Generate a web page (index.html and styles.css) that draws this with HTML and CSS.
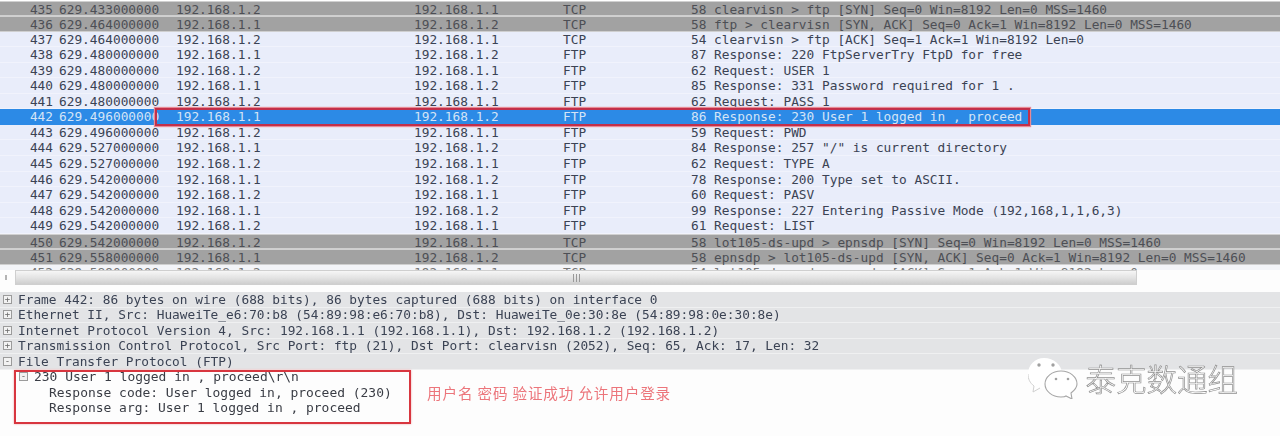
FILE: index.html
```html
<!DOCTYPE html>
<html lang="zh">
<head>
    <meta charset="UTF-8">
    <meta name="viewport" content="width=device-width, initial-scale=1.0">
    <title>FTP capture</title>
    <link rel="stylesheet" href="styles.css">
</head>
<body>
<div class="page">

    <!-- packet list -->
    <div class="packets">
        <div class="row tcp"><span>435</span><span class="time">629.433000000</span><span>192.168.1.2</span><span>192.168.1.1</span><span>TCP</span><span class="info">58 clearvisn &gt; ftp [SYN] Seq=0 Win=8192 Len=0 MSS=1460</span></div>
        <div class="row tcp"><span>436</span><span class="time">629.464000000</span><span>192.168.1.1</span><span>192.168.1.2</span><span>TCP</span><span class="info">58 ftp &gt; clearvisn [SYN, ACK] Seq=0 Ack=1 Win=8192 Len=0 MSS=1460</span></div>
        <div class="row"><span>437</span><span class="time">629.464000000</span><span>192.168.1.2</span><span>192.168.1.1</span><span>TCP</span><span class="info">54 clearvisn &gt; ftp [ACK] Seq=1 Ack=1 Win=8192 Len=0</span></div>
        <div class="row"><span>438</span><span class="time">629.480000000</span><span>192.168.1.1</span><span>192.168.1.2</span><span>FTP</span><span class="info">87 Response: 220 FtpServerTry FtpD for free</span></div>
        <div class="row"><span>439</span><span class="time">629.480000000</span><span>192.168.1.2</span><span>192.168.1.1</span><span>FTP</span><span class="info">62 Request: USER 1</span></div>
        <div class="row"><span>440</span><span class="time">629.480000000</span><span>192.168.1.1</span><span>192.168.1.2</span><span>FTP</span><span class="info">85 Response: 331 Password required for 1 .</span></div>
        <div class="row"><span>441</span><span class="time">629.480000000</span><span>192.168.1.2</span><span>192.168.1.1</span><span>FTP</span><span class="info">62 Request: PASS 1</span></div>
        <div class="row selected"><span>442</span><span class="time">629.496000000</span><span>192.168.1.1</span><span>192.168.1.2</span><span>FTP</span><span class="info">86 Response: 230 User 1 logged in , proceed</span></div>
        <div class="row"><span>443</span><span class="time">629.496000000</span><span>192.168.1.2</span><span>192.168.1.1</span><span>FTP</span><span class="info">59 Request: PWD</span></div>
        <div class="row"><span>444</span><span class="time">629.527000000</span><span>192.168.1.1</span><span>192.168.1.2</span><span>FTP</span><span class="info">84 Response: 257 "/" is current directory</span></div>
        <div class="row"><span>445</span><span class="time">629.527000000</span><span>192.168.1.2</span><span>192.168.1.1</span><span>FTP</span><span class="info">62 Request: TYPE A</span></div>
        <div class="row"><span>446</span><span class="time">629.542000000</span><span>192.168.1.1</span><span>192.168.1.2</span><span>FTP</span><span class="info">78 Response: 200 Type set to ASCII.</span></div>
        <div class="row"><span>447</span><span class="time">629.542000000</span><span>192.168.1.2</span><span>192.168.1.1</span><span>FTP</span><span class="info">60 Request: PASV</span></div>
        <div class="row"><span>448</span><span class="time">629.542000000</span><span>192.168.1.1</span><span>192.168.1.2</span><span>FTP</span><span class="info">99 Response: 227 Entering Passive Mode (192,168,1,1,6,3)</span></div>
        <div class="row"><span>449</span><span class="time">629.542000000</span><span>192.168.1.2</span><span>192.168.1.1</span><span>FTP</span><span class="info">61 Request: LIST</span></div>
        <div class="row tcp"><span>450</span><span class="time">629.542000000</span><span>192.168.1.2</span><span>192.168.1.1</span><span>TCP</span><span class="info">58 lot105-ds-upd &gt; epnsdp [SYN] Seq=0 Win=8192 Len=0 MSS=1460</span></div>
        <div class="row tcp"><span>451</span><span class="time">629.558000000</span><span>192.168.1.1</span><span>192.168.1.2</span><span>TCP</span><span class="info">58 epnsdp &gt; lot105-ds-upd [SYN, ACK] Seq=0 Ack=1 Win=8192 Len=0 MSS=1460</span></div>
        <div class="row last"><span>452</span><span class="time">629.589000000</span><span>192.168.1.2</span><span>192.168.1.1</span><span>TCP</span><span class="info">54 lot105-ds-upd &gt; epnsdp [ACK] Seq=1 Ack=1 Win=8192 Len=0</span></div>
    </div>

    <!-- scrollbar -->
    <div class="scroll-row">
        <span class="scroll-arrow"></span>
        <div class="scroll-track"><span class="scroll-grip"></span></div>
    </div>

    <!-- packet details -->
    <div class="details">
        <div class="detail"><span class="toggle">+</span>Frame 442: 86 bytes on wire (688 bits), 86 bytes captured (688 bits) on interface 0</div>
        <div class="detail"><span class="toggle">+</span>Ethernet II, Src: HuaweiTe_e6:70:b8 (54:89:98:e6:70:b8), Dst: HuaweiTe_0e:30:8e (54:89:98:0e:30:8e)</div>
        <div class="detail"><span class="toggle">+</span>Internet Protocol Version 4, Src: 192.168.1.1 (192.168.1.1), Dst: 192.168.1.2 (192.168.1.2)</div>
        <div class="detail"><span class="toggle">+</span>Transmission Control Protocol, Src Port: ftp (21), Dst Port: clearvisn (2052), Seq: 65, Ack: 17, Len: 32</div>
        <div class="detail"><span class="toggle">-</span>File Transfer Protocol (FTP)</div>
    </div>

    <!-- ftp tree + note + watermark -->
    <div class="bottom">
        <div class="tree-box">
            <div class="tree-line"><span class="toggle">-</span>230 User 1 logged in , proceed\r\n</div>
            <div class="tree-line sub">Response code: User logged in, proceed (230)</div>
            <div class="tree-line sub">Response arg: User 1 logged in , proceed</div>
        </div>
        <div class="note">用户名 密码 验证成功 允许用户登录</div>
        <div class="watermark">
            <svg class="wechat" width="50" height="41" viewBox="0 0 50 41">
                <path d="M16 0C7 0 0 7 0 16c0 5 2 9 6 12l-1 6 7-4c2 1 4 1 6 1 9 0 16-7 16-15C34 7 26 0 16 0z" fill="#fff"/>
                <path d="M0 16c0 5 2 9 6 12l-1 6 7-4" fill="none" stroke="#cfcfcf" stroke-width="1"/>
                <path d="M33 13c-9 0-16 6-16 13s7 13 16 13c2 0 4 0 5-1l6 3-1-6c4-3 6-6 6-9 0-7-7-13-16-13z" fill="#fff" stroke="#a6a6a6" stroke-width="1.1"/>
                <circle cx="11" cy="7" r="1.7" fill="#a0a0a0"/>
                <circle cx="25" cy="7" r="1.7" fill="#a0a0a0"/>
                <circle cx="28" cy="21" r="1.3" fill="#a0a0a0"/>
                <circle cx="40" cy="21" r="1.3" fill="#a0a0a0"/>
            </svg>
            <span class="wm-text">泰克数通组</span>
        </div>
    </div>

    <!-- red highlight around the selected packet -->
    <div class="highlight"></div>
</div>
</body>
</html>
```

FILE: styles.css
```css
* {
    margin: 0;
    padding: 0;
    box-sizing: border-box;
}

body {
    background: #fdfdfd;
    overflow: hidden;
    font-family: "DejaVu Sans Mono", "Liberation Mono", monospace;
    font-size: 12.8px;
    color: #3b4354;
}

.page {
    position: relative;
    width: 1280px;
    height: 436px;
    filter: blur(0.65px);
}

/* packet list */
.packets {
    height: 270px;
    padding-top: 0.5px;
    overflow: hidden;
    background: #fff;
}

.row {
    display: grid;
    grid-template-columns: 53px 123px 238px 149px 128px 1fr;
    height: 15.55px;
    line-height: 15.55px;
    white-space: pre;
    background: #e9edfa;
    border-bottom: 1px solid #f1f3fc;
}

.row span:first-child {
    text-align: right;
}

.time {
    padding-left: 6px;
}

.tcp {
    background: #a2a2a2;
    color: #4d4f55;
    border-top: 1px solid #d0d0d0;
    border-bottom: 1px solid #cfcfcf;
}

.selected {
    background: #2c8ae6;
    color: #d4e4f6;
    border-bottom: 0;
}

.last {
    background: #f3f4f8;
    color: #777;
    border: 0;
}

/* scrollbar */
.scroll-row {
    display: flex;
    align-items: center;
    height: 15px;
    margin-bottom: 7px;
    padding-left: 5px;
}

.scroll-arrow {
    width: 2px;
    height: 5px;
    margin-right: 8px;
    background: #b4b4b4;
}

.scroll-track {
    display: flex;
    align-items: center;
    width: 1122px;
    height: 15px;
    padding-left: 557px;
    border: 1px solid #cfcfcf;
    background: linear-gradient(#f6f6f6, #e2e2e2 55%, #cecece);
}

.scroll-grip {
    width: 7px;
    height: 8px;
    background: repeating-linear-gradient(90deg, #999 0 1px, transparent 1px 3px);
}

/* packet details */
.details {
    background: #e3e4e6;
    height: 77px;
}

.detail {
    display: flex;
    align-items: center;
    height: 15.55px;
    line-height: 15.55px;
    white-space: pre;
    padding-left: 3px;
    border-bottom: 1px solid #eff0f1;
}

.toggle {
    flex: none;
    width: 9px;
    height: 9px;
    margin-right: 6px;
    border: 1px solid #9b9b9b;
    font-size: 9px;
    line-height: 7px;
    text-align: center;
    color: #666;
    background: #f2f2f2;
}

/* bottom part */
.bottom {
    display: flex;
    align-items: flex-start;
    padding-left: 14px;
    height: 67px;
}

.tree-box {
    width: 397px;
    height: 54px;
    margin-top: 1px;
    padding-left: 3px;
    border: 2px solid #d8363f;
    box-shadow: 0 0 2px #f0a8ac;
    font-size: 12.95px;
    color: #3a3d45;
}

.tree-line {
    display: flex;
    align-items: center;
    height: 15.5px;
    line-height: 15.5px;
    white-space: pre;
}

.tree-line:first-child {
    margin-top: -3px;
}

.sub {
    padding-left: 30px;
}

.note {
    margin: 15px 0 0 16px;
    font-family: "Noto Sans CJK SC", sans-serif;
    font-size: 14.6px;
    letter-spacing: 0.85px;
    line-height: 17px;
    color: #ec757b;
    white-space: nowrap;
}

.watermark {
    display: flex;
    align-items: center;
    gap: 8px;
    margin: -11px 0 0 auto;
    padding-right: 42px;
}

.wm-text {
    font-family: "Noto Sans CJK SC", sans-serif;
    font-size: 30.5px;
    font-weight: 300;
    line-height: 41px;
    color: #fff;
    -webkit-text-stroke: 0.7px #8f8f8f;
}

/* over the selected row */
.highlight {
    position: absolute;
    left: 155px;
    top: 108px;
    width: 875px;
    height: 18px;
    border: 2px solid #c2304a;
    box-shadow: 0 0 1px 1px #e88a94;
}
```
